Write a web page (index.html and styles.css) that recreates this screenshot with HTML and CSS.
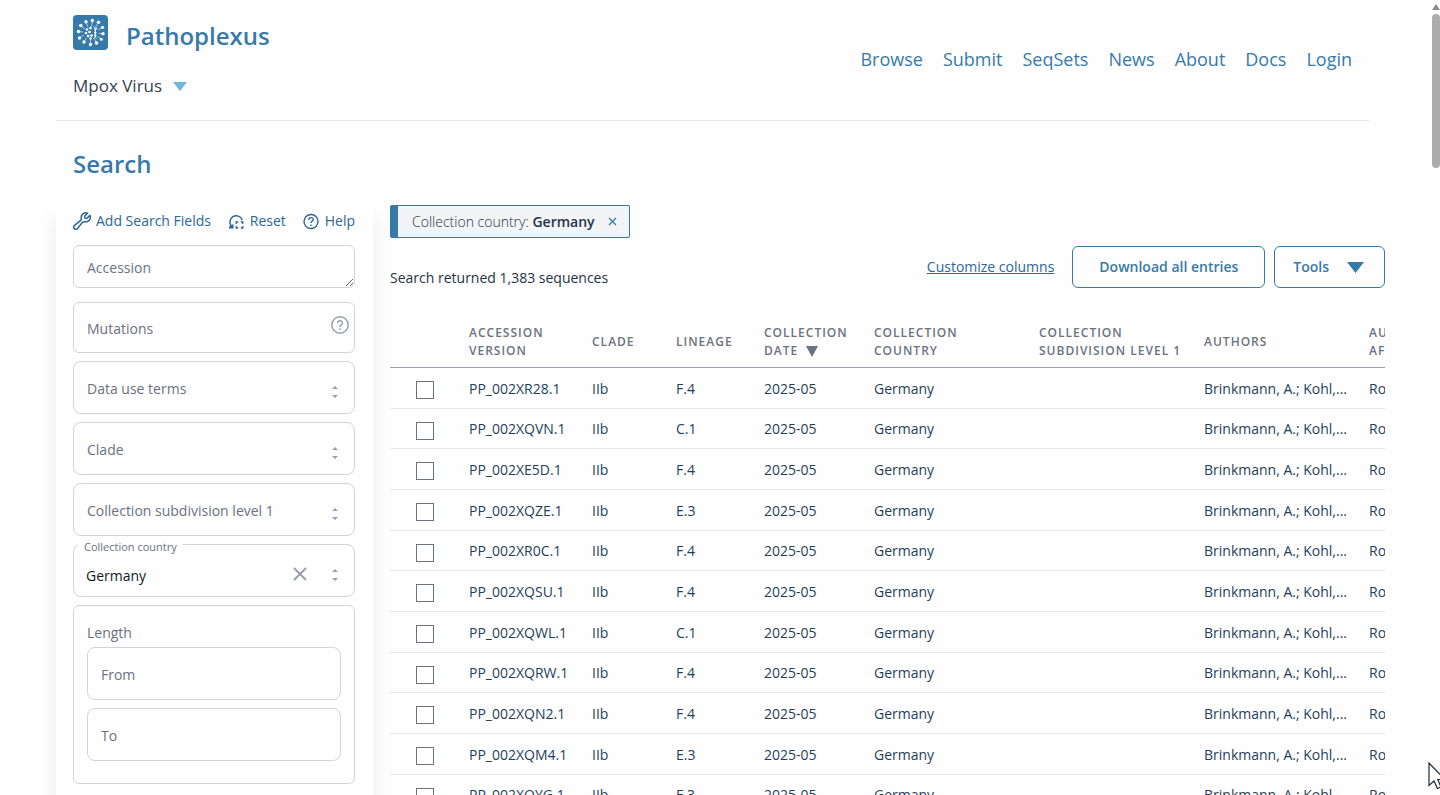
FILE: index.html
```html
<!DOCTYPE html>
<html lang="en">
<head>
<meta charset="utf-8">
<title>Mpox Virus - Search | Pathoplexus</title>
<link rel="stylesheet" href="styles.css">
</head>
<body>
<header class="site-header">
  <div class="brand">
    <a class="brand-link" href="#">
      <svg class="logo" viewBox="0 0 35 35" aria-hidden="true">
        <rect width="35" height="35" rx="4" fill="#367aab"/>
        <g stroke="#fff" stroke-width="0.6">
          <path d="M18.500 11.500L19.500 6M22 12.500L25.500 7.500M25 15L29.500 12.500M25.500 18.500L30 18.500M24.500 21.500L28.500 24M21.500 24L23.500 28M17.500 24.500L17.500 29.500M13.500 23L11 27M11 20L6.500 23M10 17L5.500 16.500M12 14L7.500 10.500M15 12L13 7"/>
        </g>
        <g fill="#fff">
          <circle cx="19.300" cy="5.500" r="1.700"/><circle cx="25.500" cy="7.300" r="1.700"/><circle cx="29.500" cy="12.300" r="1.600"/><circle cx="30" cy="18.700" r="1.700"/><circle cx="28.300" cy="24.300" r="1.500"/><circle cx="23.500" cy="28" r="1.800"/><circle cx="17.500" cy="29.500" r="1.700"/><circle cx="11" cy="27" r="1.700"/><circle cx="6.500" cy="23" r="1.700"/><circle cx="5.500" cy="16.500" r="1.700"/><circle cx="7.800" cy="10.500" r="1.700"/><circle cx="13" cy="6.800" r="1.700"/>
          <circle cx="14" cy="14.500" r="1.300"/><circle cx="17.500" cy="13" r="1.300"/><circle cx="13" cy="18" r="1.300"/><circle cx="16.500" cy="17" r="1.300"/><circle cx="15" cy="21" r="1.300"/><circle cx="18.500" cy="20.500" r="1.300"/><circle cx="17.500" cy="23.500" r="1.200"/>
        </g>
        <path d="M20.500 11.500C25 14.500 19.500 20 23.500 23.500M24.500 12C19.500 15.500 25.500 20 20.500 24M21 14h3M21 17.500h2.500M21 20.500h2.500" fill="none" stroke="#fff" stroke-width="0.900"/>
      </svg>
      <span>Pathoplexus</span>
    </a>
    <button class="organism" type="button">Mpox Virus
      <svg class="organism-arrow" viewBox="0 0 14 9" aria-hidden="true"><path d="M0 0H14L7 9Z" fill="#6cb6dc"/></svg>
    </button>
  </div>
  <nav class="nav">
    <a href="#">Browse</a><a href="#">Submit</a><a href="#">SeqSets</a><a href="#">News</a><a href="#">About</a><a href="#">Docs</a><a href="#">Login</a>
  </nav>
</header>

<main>
  <h1 class="title">Search</h1>
  <div class="layout">
    <aside class="sidebar">
      <div class="actions">
        <button type="button"><svg class="action-icon" viewBox="0 0 18 18" aria-hidden="true"><path d="M14.600 1.200A4.600 4.600 0 0 0 8.300 6.300C8.400 7.500 8.100 8.100 7.400 8.700L1.300 13.600A2 2 0 1 0 4.300 16.700L9.300 10.600C9.900 9.900 10.500 9.600 11.600 9.700A4.600 4.600 0 0 0 16.900 3.400L14 6.200L11.900 6L11.700 4Z" fill="none" stroke="#2b669a" stroke-width="1.500" stroke-linejoin="round"/></svg>Add Search Fields</button>
        <button type="button"><svg class="action-icon" viewBox="0 0 18 18" aria-hidden="true"><path d="M4.600 14.500A6.400 6.400 0 1 1 15.300 8" fill="none" stroke="#2b669a" stroke-width="1.500"/><path d="M1.500 16.500H6.500V11.500L4.800 13.200L3.600 12Z" fill="#2b669a"/><path d="M9.200 12V10H11.200M13.800 10H15.800V12M15.800 14V16H13.800M11.200 16H9.200V14" fill="none" stroke="#2b669a" stroke-width="1.300"/></svg>Reset</button>
        <button type="button"><svg class="action-icon" viewBox="0 0 18 18" aria-hidden="true"><circle cx="9" cy="9.500" r="7" fill="none" stroke="#2b669a" stroke-width="1.400"/><path d="M6.700 7.900C6.700 4.800 11.400 4.900 11.300 7.600C11.200 9.200 9 9.100 9 11M9 12.500V13.900" fill="none" stroke="#2b669a" stroke-width="1.300"/></svg>Help</button>
      </div>

      <form class="fields">
        <textarea class="control accession" rows="1" aria-label="Accession" placeholder="Accession"></textarea>
        <div class="field">
          <input class="control mutations" type="text" aria-label="Mutations" placeholder="Mutations">
          <button class="help-button" type="button" aria-label="Mutation help"><svg viewBox="0 0 18 18" aria-hidden="true"><circle cx="9" cy="9" r="8.200" fill="none" stroke="#9a9fab" stroke-width="1.500"/><path d="M6.600 7.200C6.600 3.700 11.600 3.900 11.500 7C11.400 8.900 9 8.800 9 10.900M9 12.300V13.900" fill="none" stroke="#9a9fab" stroke-width="1.500"/></svg></button>
        </div>
        <div class="field">
          <input class="control" type="text" role="combobox" aria-expanded="false" aria-label="Data use terms" placeholder="Data use terms">
          <button class="toggle" type="button" aria-label="Show options"><svg viewBox="0 0 8 14" aria-hidden="true"><path d="M1 4L4 1L7 4ZM1 10L4 13L7 10Z" fill="#9a9fab"/></svg></button>
        </div>
        <div class="field">
          <input class="control" type="text" role="combobox" aria-expanded="false" aria-label="Clade" placeholder="Clade">
          <button class="toggle" type="button" aria-label="Show options"><svg viewBox="0 0 8 14" aria-hidden="true"><path d="M1 4L4 1L7 4ZM1 10L4 13L7 10Z" fill="#9a9fab"/></svg></button>
        </div>
        <div class="field">
          <input class="control" type="text" role="combobox" aria-expanded="false" aria-label="Collection subdivision level 1" placeholder="Collection subdivision level 1">
          <button class="toggle" type="button" aria-label="Show options"><svg viewBox="0 0 8 14" aria-hidden="true"><path d="M1 4L4 1L7 4ZM1 10L4 13L7 10Z" fill="#9a9fab"/></svg></button>
        </div>
        <div class="field">
          <label class="floating" for="country">Collection country</label>
          <input class="control filled" id="country" type="text" role="combobox" aria-expanded="false" value="Germany">
          <button class="clear" type="button" aria-label="Clear"><svg viewBox="0 0 14 14" aria-hidden="true"><path d="M1 1L13 13M13 1L1 13" stroke="#9a9fab" stroke-width="2"/></svg></button>
          <button class="toggle" type="button" aria-label="Show options"><svg viewBox="0 0 8 14" aria-hidden="true"><path d="M1 4L4 1L7 4ZM1 10L4 13L7 10Z" fill="#9a9fab"/></svg></button>
        </div>
        <div class="range" role="group" aria-labelledby="length-label">
          <span class="range-title" id="length-label">Length</span>
          <input class="control" type="text" aria-label="Length from" placeholder="From">
          <input class="control" type="text" aria-label="Length to" placeholder="To">
        </div>
      </form>
    </aside>

    <section class="results">
      <div class="chip"><span class="chip-text">Collection country: <b>Germany</b></span><button type="button" aria-label="Remove filter"><svg viewBox="0 0 9 9" aria-hidden="true"><path d="M1 1L8 8M8 1L1 8" stroke="#367aab" stroke-width="1.300"/></svg></button></div>
      <div class="toolbar">
        <p class="count">Search returned 1,383 sequences</p>
        <button class="customize" type="button">Customize columns</button>
        <button class="outline download" type="button">Download all entries</button>
        <button class="outline tools" type="button">Tools <svg viewBox="0 0 17 11" aria-hidden="true"><path d="M0 0H17L8.500 11Z" fill="#367aab"/></svg></button>
      </div>
      <div class="table-clip">
        <table class="table">
          <colgroup><col class="c-check"><col class="c-accession"><col class="c-clade"><col class="c-lineage"><col class="c-date"><col class="c-wide"><col class="c-wide"><col class="c-wide"><col class="c-wide"></colgroup>
          <thead>
            <tr><th></th><th>Accession<br>version</th><th>Clade</th><th>Lineage</th><th>Collection<br>date <svg class="sort" viewBox="0 0 12 11" aria-hidden="true"><path d="M0 0H12L6 11Z" fill="#6b7280"/></svg></th><th>Collection<br>country</th><th>Collection<br>subdivision level 1</th><th>Authors</th><th>Author<br>affiliations</th></tr>
          </thead>
          <tbody>
            <tr><td><input type="checkbox" aria-label="Select PP_002XR28.1"></td><td>PP_002XR28.1</td><td>IIb</td><td>F.4</td><td>2025-05</td><td>Germany</td><td></td><td>Brinkmann, A.; Kohl,...</td><td>Robert Koch</td></tr>
            <tr><td><input type="checkbox" aria-label="Select PP_002XQVN.1"></td><td>PP_002XQVN.1</td><td>IIb</td><td>C.1</td><td>2025-05</td><td>Germany</td><td></td><td>Brinkmann, A.; Kohl,...</td><td>Robert Koch</td></tr>
            <tr><td><input type="checkbox" aria-label="Select PP_002XE5D.1"></td><td>PP_002XE5D.1</td><td>IIb</td><td>F.4</td><td>2025-05</td><td>Germany</td><td></td><td>Brinkmann, A.; Kohl,...</td><td>Robert Koch</td></tr>
            <tr><td><input type="checkbox" aria-label="Select PP_002XQZE.1"></td><td>PP_002XQZE.1</td><td>IIb</td><td>E.3</td><td>2025-05</td><td>Germany</td><td></td><td>Brinkmann, A.; Kohl,...</td><td>Robert Koch</td></tr>
            <tr><td><input type="checkbox" aria-label="Select PP_002XR0C.1"></td><td>PP_002XR0C.1</td><td>IIb</td><td>F.4</td><td>2025-05</td><td>Germany</td><td></td><td>Brinkmann, A.; Kohl,...</td><td>Robert Koch</td></tr>
            <tr><td><input type="checkbox" aria-label="Select PP_002XQSU.1"></td><td>PP_002XQSU.1</td><td>IIb</td><td>F.4</td><td>2025-05</td><td>Germany</td><td></td><td>Brinkmann, A.; Kohl,...</td><td>Robert Koch</td></tr>
            <tr><td><input type="checkbox" aria-label="Select PP_002XQWL.1"></td><td>PP_002XQWL.1</td><td>IIb</td><td>C.1</td><td>2025-05</td><td>Germany</td><td></td><td>Brinkmann, A.; Kohl,...</td><td>Robert Koch</td></tr>
            <tr><td><input type="checkbox" aria-label="Select PP_002XQRW.1"></td><td>PP_002XQRW.1</td><td>IIb</td><td>F.4</td><td>2025-05</td><td>Germany</td><td></td><td>Brinkmann, A.; Kohl,...</td><td>Robert Koch</td></tr>
            <tr><td><input type="checkbox" aria-label="Select PP_002XQN2.1"></td><td>PP_002XQN2.1</td><td>IIb</td><td>F.4</td><td>2025-05</td><td>Germany</td><td></td><td>Brinkmann, A.; Kohl,...</td><td>Robert Koch</td></tr>
            <tr><td><input type="checkbox" aria-label="Select PP_002XQM4.1"></td><td>PP_002XQM4.1</td><td>IIb</td><td>E.3</td><td>2025-05</td><td>Germany</td><td></td><td>Brinkmann, A.; Kohl,...</td><td>Robert Koch</td></tr>
            <tr><td><input type="checkbox" aria-label="Select PP_002XQYG.1"></td><td>PP_002XQYG.1</td><td>IIb</td><td>F.3</td><td>2025-05</td><td>Germany</td><td></td><td>Brinkmann, A.; Kohl,...</td><td>Robert Koch</td></tr>
          </tbody>
        </table>
      </div>
    </section>
  </div>
</main>
<div class="scrollbar" aria-hidden="true"><svg viewBox="0 0 8 14"><path d="M0 10L4 4L8 10Z" fill="#8a8a8a"/></svg><div class="thumb"></div></div>
<svg class="cursor" viewBox="0 0 18 28" aria-hidden="true"><path d="M1 1V23.500L6 19L9.500 26.500L13 25L9.800 17.500H17Z" fill="#fff" stroke="#1f2937" stroke-width="1.200"/></svg>
</body>
</html>
```
FILE: styles.css
```css
* { box-sizing: border-box; }
body {
  margin: 0;
  height: 100vh;
  overflow: hidden;
  position: relative;
  background: #fefefe;
  color: #1f3347;
  font: 14px/20px "Open Sans", "Noto Sans", sans-serif;
}
button {
  padding: 0;
  border: 0;
  background: none;
  color: inherit;
  font: inherit;
}
svg { display: block; flex: none; }

.site-header {
  display: flex;
  justify-content: space-between;
  align-items: center;
  height: 121px;
  margin: 0 71px 0 56px;
  padding: 0 17px;
  border-bottom: 1px solid #e5e7eb;
}
.brand {
  display: flex;
  flex-direction: column;
  align-items: flex-start;
  gap: 19px;
  padding-bottom: 9px;
}
.brand-link {
  display: flex;
  align-items: flex-start;
  gap: 18px;
  color: #367aab;
  font-size: 24px;
  line-height: 42px;
  font-weight: 600;
  text-decoration: none;
}
.logo { width: 35px; height: 35px; }
.organism {
  display: flex;
  align-items: center;
  gap: 11px;
  color: #374151;
  font-size: 17px;
}
.organism-arrow { width: 14px; height: 9px; }
.nav {
  display: flex;
  gap: 20px;
  padding-bottom: 2px;
  font-size: 18px;
  line-height: 28px;
}
.nav a { color: #367aab; text-decoration: none; }

.title {
  margin: 0;
  padding: 25px 73px 0;
  color: #367aab;
  font-size: 24px;
  line-height: 36px;
  font-weight: 600;
}
.layout {
  display: flex;
  align-items: flex-start;
  gap: 17px;
  margin: 19px 55px 0 56px;
}
.sidebar {
  flex: none;
  width: 317px;
  padding: 10px 18px 17px 17px;
  box-shadow: 0 16px 18px rgba(0, 0, 0, 0.08);
}
.actions {
  display: flex;
  justify-content: space-between;
  color: #2b669a;
}
.actions button {
  display: flex;
  align-items: center;
  gap: 5px;
}
.action-icon { width: 18px; height: 18px; }

.fields {
  display: flex;
  flex-direction: column;
  gap: 8px;
  margin-top: 14px;
}
.field { display: flex; position: relative; }
.control {
  display: block;
  width: 100%;
  height: 53px;
  margin: 0;
  padding: 1px 70px 0 13px;
  border: 1px solid #d1d5db;
  border-radius: 8px;
  background: #fefefe;
  color: #111827;
  font: inherit;
}
.control::placeholder { color: #6b7280; opacity: 1; }
.control.accession {
  height: 43px;
  margin-bottom: 6px;
  padding: 12px 13px;
  border-radius: 6px;
  line-height: 20px;
  resize: vertical;
  overflow: hidden;
}
.control.mutations { height: 51px; border-radius: 6px; }
.control.filled { padding: 9px 70px 0 12px; }
.range .control { padding: 1px 13px 0; }
.floating {
  position: absolute;
  top: -5px;
  left: 5px;
  padding: 0 6px;
  background: #fefefe;
  color: #6b7280;
  font-size: 11px;
  line-height: 16px;
}
.toggle {
  position: absolute;
  top: 24px;
  right: 16px;
}
.toggle svg { width: 8px; height: 14px; }
.help-button {
  position: absolute;
  top: 14px;
  right: 6px;
}
.help-button svg { width: 18px; height: 18px; }
.clear {
  position: absolute;
  top: 23px;
  right: 48px;
}
.clear svg { width: 14px; height: 14px; }
.range {
  display: flex;
  flex-direction: column;
  gap: 8px;
  padding: 17px 13px 22px;
  border: 1px solid #d1d5db;
  border-radius: 6px;
}
.range-title { margin-bottom: -4px; color: #6b7280; }

.results { flex: 1; min-width: 0; padding-top: 4px; }
.chip {
  display: inline-flex;
  align-items: center;
  gap: 13px;
  height: 33px;
  padding: 0 12px 0 14px;
  border: 1px solid #367aab;
  border-left-width: 8px;
  border-radius: 2px;
  background: #f3f4f6;
  vertical-align: top;
}
.chip-text { font-weight: 300; }
.chip b { font-weight: 600; }
.chip svg { width: 9px; height: 9px; }
.toolbar {
  display: flex;
  align-items: center;
  margin-top: 8px;
}
.count { margin: 22px auto 0 0; }
.customize {
  margin-right: 18px;
  color: #2b669a;
  text-decoration: underline;
}
.outline {
  height: 42px;
  border: 1px solid #367aab;
  border-radius: 6px;
  color: #367aab;
  font-weight: 600;
}
.download { margin-right: 9px; padding: 0 26px; }
.tools {
  display: flex;
  align-items: center;
  gap: 18px;
  padding: 0 20px 0 18px;
}
.tools svg { width: 17px; height: 11px; }

.table-clip { overflow: hidden; margin-top: 26px; }
.table {
  width: 1144px;
  table-layout: fixed;
  border-collapse: separate;
  border-spacing: 0;
  color: #1f3f5c;
}
.c-check { width: 79px; }
.c-accession { width: 123px; }
.c-clade { width: 84px; }
.c-lineage { width: 88px; }
.c-date { width: 110px; }
.c-wide { width: 165px; }
.table th {
  height: 54px;
  padding: 2px 0 0;
  border-bottom: 1px solid #9ca3af;
  color: #6b7280;
  font-size: 12px;
  line-height: 18px;
  font-weight: 600;
  letter-spacing: 1px;
  text-align: left;
  text-transform: uppercase;
  white-space: nowrap;
}
.sort {
  display: inline-block;
  width: 12px;
  height: 11px;
  margin-left: 4px;
  vertical-align: -2px;
}
.table td {
  height: 41px;
  padding: 1px 0 0;
  border-bottom: 1px solid #e5e7eb;
  white-space: nowrap;
}
.table tr:nth-child(3n+2) td { height: 40px; }
.table input {
  display: block;
  appearance: none;
  width: 18px;
  height: 18px;
  margin: 3px 0 0 26px;
  border: 1px solid #6b7280;
  background: #fff;
}

.scrollbar {
  position: absolute;
  top: 0;
  right: 0;
  width: 8px;
}
.scrollbar svg { width: 8px; height: 14px; }
.thumb {
  height: 154px;
  border-radius: 4px;
  background: #acacac;
}
.cursor {
  position: absolute;
  right: -6px;
  bottom: 5px;
  width: 18px;
  height: 28px;
}
```
